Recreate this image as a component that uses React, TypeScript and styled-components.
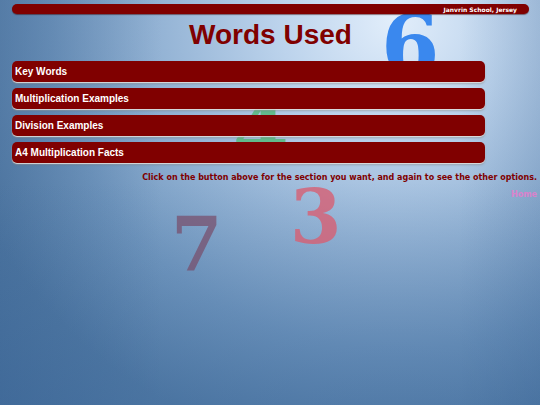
import React from "react";
import styled, { createGlobalStyle } from "styled-components";

const Global = createGlobalStyle`
  html, body {
    margin: 0;
    padding: 0;
  }
  body {
    font-family: "DejaVu Sans", Verdana, sans-serif;
  }
`;

const Page = styled.div`
  position: relative;
  width: 540px;
  height: 405px;
  overflow: hidden;
  background:
    radial-gradient(ellipse 460px 440px at 395px 20px,
      #e2eefb 0%, #bcd3ec 25%, #96b5d6 50%, #7399c0 75%, #5a82aa 100%),
    #5078a2;
`;

const Shade = styled.div`
  position: absolute;
  inset: 0;
  background:
    linear-gradient(to bottom, rgba(40, 80, 130, 0) 45%, rgba(45, 90, 145, 0.35) 100%),
    linear-gradient(to right, rgba(40, 80, 130, 0.3) 0%, rgba(40, 80, 130, 0) 30%, rgba(40, 80, 130, 0) 85%, rgba(40, 80, 130, 0.15) 100%);
  pointer-events: none;
`;

/* Loose numerals floating on the page backdrop */
const Digit = styled.span<{ $x: number; $y: number; $size: number; $color: string }>`
  position: absolute;
  left: ${(p) => p.$x}px;
  top: ${(p) => p.$y}px;
  font-family: "DejaVu Serif", "Liberation Serif", serif;
  font-weight: bold;
  font-size: ${(p) => p.$size}px;
  line-height: 1;
  color: ${(p) => p.$color};
  pointer-events: none;
`;

const Content = styled.div`
  position: relative;
  display: flex;
  flex-direction: column;
  padding: 4px 3px 0 12px;
`;

const TopBar = styled.div`
  height: 10px;
  margin-right: 8px;
  border-radius: 5px;
  background: #800000;
  box-shadow: 0 1px 1px rgba(60, 0, 0, 0.5);
  display: flex;
  align-items: center;
  justify-content: flex-end;
  padding-right: 12px;
`;

const School = styled.span`
  font-family: "DejaVu Sans", Verdana, sans-serif;
  font-weight: bold;
  font-size: 6px;
  color: #ffffff;
`;

const Title = styled.h1`
  margin: 5px 8px 0 0;
  height: 42px;
  text-align: center;
  font-family: "Liberation Sans", Arial, sans-serif;
  font-weight: bold;
  font-size: 28px;
  line-height: 32px;
  color: #800000;
`;

const Menu = styled.div`
  display: flex;
  flex-direction: column;
  gap: 6px;
  width: 473px;
`;

const MenuButton = styled.div`
  height: 21px;
  border-radius: 5px;
  background: #800000;
  box-shadow: 0 1px 1px rgba(230, 230, 230, 0.9), 0 2px 2px rgba(120, 120, 120, 0.5);
  display: flex;
  align-items: center;
  padding-left: 3px;
  font-family: "Liberation Sans", Arial, sans-serif;
  font-weight: bold;
  font-size: 10px;
  color: #ffffff;
`;

const Note = styled.p`
  margin: 10px 0 0;
  text-align: right;
  font-family: "DejaVu Sans", Verdana, sans-serif;
  font-weight: bold;
  font-size: 8px;
  color: #800000;
`;

const Home = styled.p`
  margin: 8px 0 0;
  text-align: right;
  font-family: "DejaVu Sans", Verdana, sans-serif;
  font-weight: bold;
  font-size: 8px;
  color: #ee78cc;
  opacity: 0.8;
`;

const items = [
  "Key Words",
  "Multiplication Examples",
  "Division Examples",
  "A4 Multiplication Facts",
];

export default function App() {
  return (
    <>
      <Global />
      <Page>
        <Shade />
        <Digit $x={381} $y={4} $size={84} $color="#3a88ee">6</Digit>
        <Digit $x={233} $y={92} $size={80} $color="rgba(90, 185, 130, 0.9)">4</Digit>
        <Digit $x={290} $y={180} $size={74} $color="rgba(215, 95, 115, 0.8)">3</Digit>
        <Digit $x={171} $y={207} $size={74} $color="rgba(120, 80, 110, 0.75)">7</Digit>
        <Content>
          <TopBar>
            <School>Janvrin School, Jersey</School>
          </TopBar>
          <Title>Words Used</Title>
          <Menu>
            {items.map((t) => (
              <MenuButton key={t}>{t}</MenuButton>
            ))}
          </Menu>
          <Note>Click on the button above for the section you want, and again to see the other options.</Note>
          <Home>Home</Home>
        </Content>
      </Page>
    </>
  );
}
